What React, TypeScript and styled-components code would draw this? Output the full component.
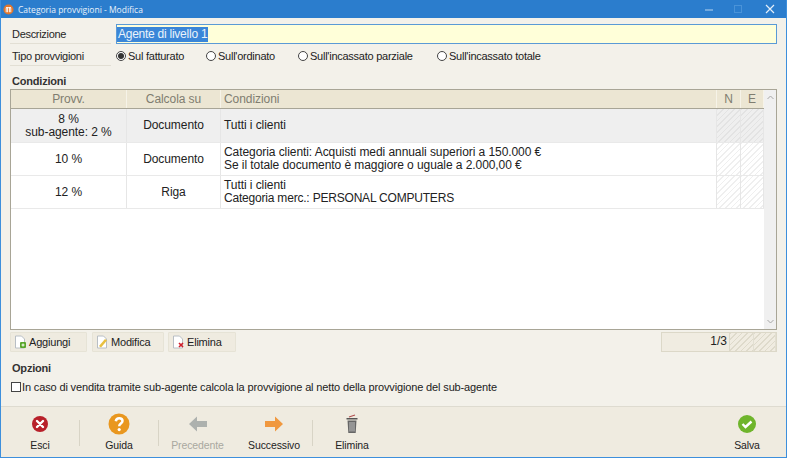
import React from "react";
import styled, { createGlobalStyle } from "styled-components";

const Global = createGlobalStyle`
  html, body { margin: 0; padding: 0; background: #f3f1ea; }
  body { font-family: "Liberation Sans", Arial, sans-serif; font-size: 12px; color: #222; }
  * { box-sizing: border-box; }
`;

const Win = styled.div`
  width: 787px; height: 458px; display: flex; flex-direction: column;
  border: 1px solid #3d8fdc; border-top: 0; background: #f3f1ea; overflow: hidden;
`;
const Title = styled.div`
  height: 18px; flex: none; margin: 0 -1px; background: #2b7dcd; color: #e8f1fa;
  display: flex; align-items: center; padding-left: 3px; font-size: 8.5px; font-family: "Open Sans", sans-serif;
`;
const TitleText = styled.span` margin-left: 4px; flex: 1; `;
const WinBtn = styled.div<{ $w: number }>`
  width: ${p => p.$w}px; height: 18px; display: flex; align-items: center; justify-content: center;
`;
const Body = styled.div` flex: 1; display: flex; flex-direction: column; padding: 6px 9px 0 9px; min-height: 0; `;
const FormRow = styled.div<{ $h: number; $mt?: number }>` display: flex; align-items: center; height: ${p => p.$h}px; margin-top: ${p => p.$mt ?? 0}px; `;
const FieldLabel = styled.div<{ $h: number }>`
  width: 101px; height: ${p => p.$h}px; margin-right: 5px; padding-left: 2px; display: flex; align-items: center;
  border-bottom: 1px solid #e2dfd4; font-size: 11px; color: #262626; letter-spacing: -0.3px;
`;
const Input = styled.div`
  flex: 1; height: 20px; background: #ffffd9; border: 1px solid #5a9ad6; display: flex; align-items: center;
  font-size: 12px; letter-spacing: -0.25px; line-height: 15px;
`;
const Selected = styled.span` background: #3a86d8; color: #e9f3fb; padding: 0 1px; `;
const Radios = styled.div` display: flex; align-items: center; `;
const RadioItem = styled.label<{ $w: number }>` width: ${p => p.$w}px; display: flex; align-items: center; font-size: 11px; letter-spacing: -0.25px; color: #222; `;
const RadioMark = styled.span<{ $on?: boolean }>`
  width: 10px; height: 10px; border-radius: 50%; border: 1px solid #444; background: #fff; margin-right: 2px;
  display: flex; align-items: center; justify-content: center;
  &::after { content: ""; width: 6px; height: 6px; border-radius: 50%; background: ${p => (p.$on ? "#333" : "transparent")}; }
`;
const Section = styled.div<{ $mt: number }>` font-weight: bold; font-size: 11px; letter-spacing: -0.2px; color: #333; margin: ${p => p.$mt}px 0 0 2px; height: 13px; line-height: 13px; `;

const Table = styled.div`
  height: 241px; margin-top: 1px; border: 1px solid #a8a596; background: #fff; display: flex; flex-shrink: 0;
`;
const TableMain = styled.div` flex: 1; display: flex; flex-direction: column; min-width: 0; `;
const Row = styled.div<{ $h: number; $head?: boolean; $sel?: boolean }>`
  display: grid; grid-template-columns: 116px 94px 496px 24px 23px; height: ${p => p.$h}px;
  background: ${p => (p.$head ? "#ece6d3" : p.$sel ? "#efefef" : "#fff")};
  border-bottom: 1px solid ${p => (p.$head ? "#a8a596" : "#e9e9e9")};
`;
const Cell = styled.div<{ $center?: boolean; $head?: boolean; $hatch?: boolean; $sel?: boolean }>`
  display: flex; flex-direction: column; justify-content: center; font-size: 12px; line-height: 13px; letter-spacing: -0.07px;
  align-items: ${p => (p.$center ? "center" : "flex-start")};
  text-align: ${p => (p.$center ? "center" : "left")};
  padding: ${p => (p.$center ? "0" : "0 3px")};
  color: ${p => (p.$head ? "#7f7d70" : "#222")};
  border-right: 1px solid ${p => (p.$head ? "#f6f3e8" : "#e6e6e6")};
  ${p => p.$hatch ? `background: repeating-linear-gradient(135deg, ${p.$sel ? "#e3e3e3" : "#efefef"} 0 1px, transparent 1px 4px);` : ""}
`;
const Caps = styled.span` letter-spacing: -0.2px; `;
const Scroll = styled.div`
  width: 12px; flex: none; background: #f0f0f0; display: flex; flex-direction: column; justify-content: space-between; align-items: center; padding: 5px 0;
`;
const Tools = styled.div` display: flex; align-items: center; height: 20px; margin-top: 2px; `;
const ToolBtn = styled.button<{ $w: number; $mr: number }>`
  width: ${p => p.$w}px; margin-right: ${p => p.$mr}px; height: 20px; padding: 0 0 0 3px; display: flex; align-items: center; gap: 2px;
  background: #efebe0; border: 1px solid #e6e3d6; border-radius: 1px; font-family: inherit; font-size: 11px; letter-spacing: -0.2px; color: #222;
`;
const Pager = styled.div`
  margin-left: auto; width: 116px; height: 20px; display: grid; grid-template-columns: 68px 24px 22px; border: 1px solid #dcd8c8; background: #f0ece1;
`;
const PagerNum = styled.div` text-align: right; padding-right: 2px; line-height: 16px; font-size: 12px; border-right: 1px solid #dcd8c8; `;
const PagerHatch = styled.div`
  border-right: 1px solid #e2dfd2;
  background: repeating-linear-gradient(135deg, #dedacb 0 1px, transparent 1px 4px);
`;
const CheckRow = styled.label` display: flex; align-items: center; margin-top: 5px; height: 14px; font-size: 11px; letter-spacing: -0.14px; color: #222; `;
const CheckBox = styled.span` width: 10px; height: 10px; border: 1px solid #444; background: #fff; margin-right: 1px; margin-left: 1px; flex: none; `;
const Footer = styled.div`
  height: 51px; flex: none; margin-top: auto; background: #efebe0; border-top: 1px solid #dedbd0; display: flex; align-items: flex-start; padding-right: 6px;
`;
const Action = styled.div<{ $w: number; $off?: boolean }>`
  width: ${p => p.$w}px; height: 50px; display: flex; flex-direction: column; align-items: center; padding-top: 5px;
  font-size: 10.5px; letter-spacing: -0.12px; color: ${p => (p.$off ? "#a9a89f" : "#222")};
  svg { height: 24px; display: block; }
`;
const ActionText = styled.span` margin-top: 3px; line-height: 13px; `;
const Sep = styled.div` width: 1px; height: 26px; margin-top: 13px; background: #d8d4c6; flex: none; `;
const Spring = styled.div` flex: 1; `;

const IconExit = () => (
  <svg width="20" height="24" viewBox="0 0 20 24"><circle cx="10" cy="12" r="8" fill="#b8202a" /><path d="M7 9l6 6M13 9l-6 6" stroke="#fff" strokeWidth="2.4" strokeLinecap="round" /></svg>
);
const IconHelp = () => (
  <svg width="24" height="24" viewBox="0 0 24 24"><circle cx="12" cy="12" r="10.5" fill="#e9971f" /><path d="M8.8 9.2c.3-2 1.7-3 3.4-3 1.900 0 3.300 1.200 3.300 2.800 0 2.600-3.300 2.600-3.300 5.200" stroke="#fff" strokeWidth="2.500" fill="none" /><circle cx="12.2" cy="17.600" r="1.600" fill="#fff" /></svg>
);
const IconLeft = () => (
  <svg width="20" height="24" viewBox="0 0 20 24"><path d="M9 4.500L1 12l8 7.500V15h10V9H9z" fill="#adb1ae" /></svg>
);
const IconRight = () => (
  <svg width="20" height="24" viewBox="0 0 20 24"><path d="M11 4.500L19 12l-8 7.500V15H1V9h10z" fill="#f0983f" /></svg>
);
const IconTrash = () => (
  <svg width="14" height="24" viewBox="0 0 14 24"><path d="M1.500 6h11v1.500h-11z" fill="#555" /><path d="M4 5l6-2" stroke="#b05050" strokeWidth="1.200" /><path d="M2.500 8.500h9l-.8 12.500H3.300z" fill="#666" /><path d="M5 10v9.500M7 10v9.500M9 10v9.500" stroke="#ddd" strokeWidth=".8" /></svg>
);
const IconSave = () => (
  <svg width="20" height="24" viewBox="0 0 20 24"><circle cx="10" cy="12" r="9" fill="#6fb52c" /><path d="M5.500 12l3 3 6-5.500" stroke="#fff" strokeWidth="2.400" fill="none" /></svg>
);
const DocIcon = ({ children }: { children: React.ReactNode }) => (
  <svg width="13" height="14" viewBox="0 0 13 14">{children}</svg>
);
const Doc = () => <path d="M1.500 1h6l3 3v9h-9z" fill="#fff" stroke="#b8bec4" />;

const rows = [
  { h: 34, sel: true, a: <>8 %<br />sub-agente: 2 %</>, b: "Documento", c: <>Tutti i clienti</> },
  { h: 33, a: "10 %", b: "Documento", c: <>Categoria clienti: Acquisti medi annuali superiori a 150.000 €<br />Se il totale documento è maggiore o uguale a 2.000,00 €</> },
  { h: 33, a: "12 %", b: "Riga", c: <>Tutti i clienti<br /><Caps>Categoria merc.: PERSONAL COMPUTERS</Caps></> },
];

export default function App() {
  return (
    <Win>
      <Global />
      <Title>
        <svg width="11" height="11" viewBox="0 0 12 12"><circle cx="6" cy="6" r="5.500" fill="#e2762b" /><path d="M3.500 9V4h1.500v5M7 9V4h1.500v5M3.500 4h5" stroke="#fff" strokeWidth="1" fill="none" /></svg>
        <TitleText>Categoria provvigioni - Modifica</TitleText>
        <WinBtn $w={28}><svg width="10" height="10"><path d="M1 6h8" stroke="#b9d6f0" /></svg></WinBtn>
        <WinBtn $w={30}><svg width="10" height="10"><rect x="1.500" y="1.500" width="7" height="7" fill="none" stroke="#4a93d8" /></svg></WinBtn>
        <WinBtn $w={34}><svg width="10" height="10"><path d="M1 1l8 8M9 1l-8 8" stroke="#e3eef9" strokeWidth="1.200" /></svg></WinBtn>
      </Title>
      <Body>
        <FormRow $h={20}>
          <FieldLabel $h={20}>Descrizione</FieldLabel>
          <Input><Selected>Agente di livello 1</Selected></Input>
        </FormRow>
        <FormRow $h={20} $mt={2}>
          <FieldLabel $h={20}>Tipo provvigioni</FieldLabel>
          <Radios>
            <RadioItem $w={90}><RadioMark $on />Sul fatturato</RadioItem>
            <RadioItem $w={92}><RadioMark />Sull'ordinato</RadioItem>
            <RadioItem $w={139}><RadioMark />Sull'incassato parziale</RadioItem>
            <RadioItem $w={120}><RadioMark />Sull'incassato totale</RadioItem>
          </Radios>
        </FormRow>
        <Section $mt={9}>Condizioni</Section>
        <Table>
          <TableMain>
            <Row $h={19} $head>
              <Cell $center $head>Provv.</Cell>
              <Cell $center $head>Calcola su</Cell>
              <Cell $head>Condizioni</Cell>
              <Cell $center $head>N</Cell>
              <Cell $center $head>E</Cell>
            </Row>
            {rows.map((r, i) => (
              <Row key={i} $h={r.h} $sel={r.sel}>
                <Cell $center>{r.a}</Cell>
                <Cell $center>{r.b}</Cell>
                <Cell>{r.c}</Cell>
                <Cell $hatch $sel={r.sel} />
                <Cell $hatch $sel={r.sel} />
              </Row>
            ))}
          </TableMain>
          <Scroll>
            <svg width="7" height="5"><path d="M.5 4L3.500 1l3 3" fill="none" stroke="#a6a6a6" /></svg>
            <svg width="7" height="5"><path d="M.5 1l3 3 3-3" fill="none" stroke="#a6a6a6" /></svg>
          </Scroll>
        </Table>
        <Tools>
          <ToolBtn $w={77} $mr={5}>
            <DocIcon><Doc /><rect x="6" y="7" width="6" height="6" rx="1" fill="#5aa62c" /><path d="M7.500 10h3M9 8.500v3" stroke="#fff" /></DocIcon>
            Aggiungi
          </ToolBtn>
          <ToolBtn $w={72} $mr={4}>
            <DocIcon><Doc /><path d="M3 11l6-7 2 1.500-6 7z" fill="#e8c040" /></DocIcon>
            Modifica
          </ToolBtn>
          <ToolBtn $w={68} $mr={0}>
            <DocIcon><Doc /><path d="M7 8l4 4M11 8l-4 4" stroke="#d01f2a" strokeWidth="1.600" /></DocIcon>
            Elimina
          </ToolBtn>
          <Pager>
            <PagerNum>1/3</PagerNum>
            <PagerHatch />
            <PagerHatch />
          </Pager>
        </Tools>
        <Section $mt={10}>Opzioni</Section>
        <CheckRow><CheckBox />In caso di vendita tramite sub-agente calcola la provvigione al netto della provvigione del sub-agente</CheckRow>
      </Body>
      <Footer>
        <Action $w={78}><IconExit /><ActionText>Esci</ActionText></Action>
        <Sep />
        <Action $w={78}><IconHelp /><ActionText>Guida</ActionText></Action>
        <Sep />
        <Action $w={77} $off><IconLeft /><ActionText>Precedente</ActionText></Action>
        <Action $w={76}><IconRight /><ActionText>Successivo</ActionText></Action>
        <Sep />
        <Action $w={78}><IconTrash /><ActionText>Elimina</ActionText></Action>
        <Spring />
        <Action $w={66}><IconSave /><ActionText>Salva</ActionText></Action>
      </Footer>
    </Win>
  );
}
